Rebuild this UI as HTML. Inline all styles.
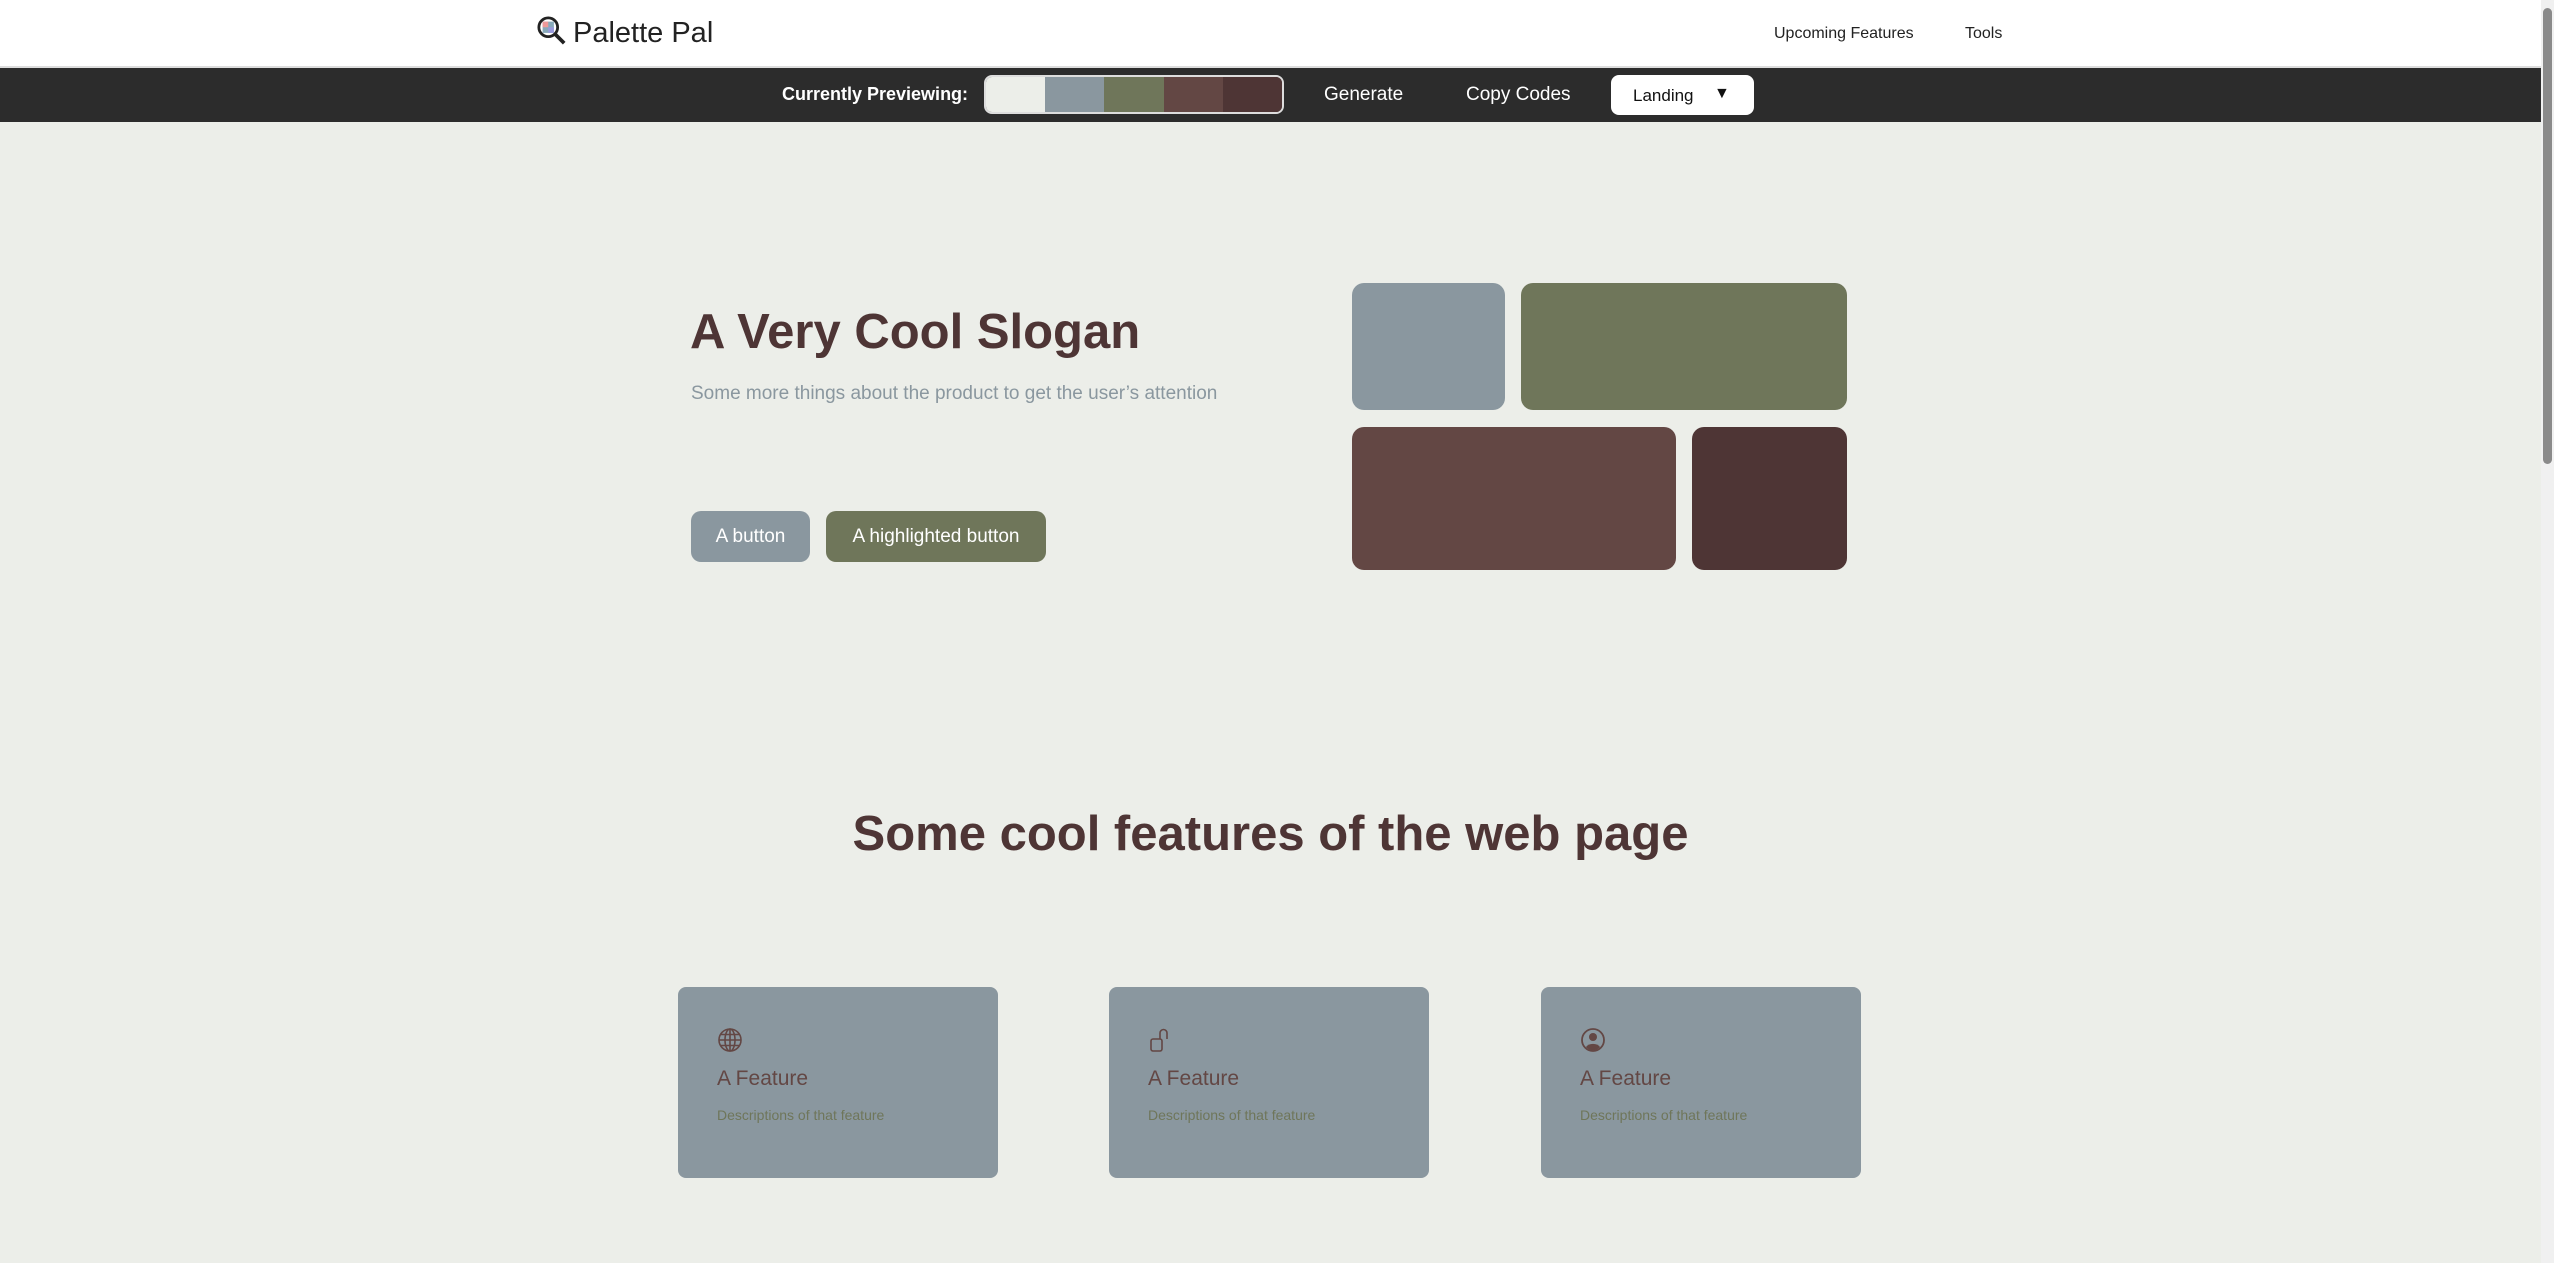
<!DOCTYPE html>
<html><head><meta charset="utf-8"><style>
*{margin:0;padding:0;box-sizing:border-box}
body{width:2554px;height:1263px;overflow:hidden;background:#ECEEE9;font-family:"Liberation Sans",sans-serif;position:relative}
.abs{position:absolute}
.hdr{left:0;top:0;width:2541px;height:66px;background:#fff}
.bar{left:0;top:66px;width:2541px;height:56px;background:#2c2c2c;border-top:2px solid #ddd}
.w{color:#fff;font-size:19px}
.sw{left:984px;top:75px;width:300px;height:39px;border:2px solid #ddd;border-radius:8px;overflow:hidden;display:flex}
.sw div{flex:1}
.tile{border-radius:12px}
.card{top:987px;width:320px;height:191px;background:#8A979F;border-radius:8px}
.card svg{position:absolute;left:39px;top:40px}
.card .t{position:absolute;left:39px;top:80px;font-size:21px;color:#634744}
.card .d{position:absolute;left:39px;top:120px;font-size:14px;color:#6F765A}
</style></head><body>
<div class="abs hdr"></div>
<svg class="abs" style="left:537px;top:16px" width="30" height="30" viewBox="0 0 32 32"><circle cx="12" cy="12" r="10" fill="none" stroke="#222" stroke-width="3"/><rect x="6" y="6" width="12" height="12" fill="#8ab"/><rect x="6" y="6" width="6" height="6" fill="#e99"/><rect x="12" y="12" width="6" height="6" fill="#99d"/><line x1="19" y1="19" x2="29" y2="29" stroke="#222" stroke-width="4"/></svg>
<div class="abs" style="left:573px;top:17px;font-size:29px;color:#222">Palette Pal</div>
<div class="abs" style="left:1774px;top:25px;font-size:16px;color:#222">Upcoming Features</div>
<div class="abs" style="left:1965px;top:25px;font-size:16px;color:#222">Tools</div>
<div class="abs bar"></div>
<div class="abs w" style="left:782px;top:84px;font-weight:bold;font-size:18px">Currently Previewing:</div>
<div class="abs sw"><div style="background:#ECEEE9"></div><div style="background:#8A979F"></div><div style="background:#6F765A"></div><div style="background:#634744"></div><div style="background:#4E3535"></div></div>
<div class="abs w" style="left:1324px;top:84px">Generate</div>
<div class="abs w" style="left:1466px;top:84px">Copy Codes</div>
<div class="abs" style="left:1611px;top:75px;width:143px;height:40px;background:#fff;border-radius:8px"><span class="abs" style="left:22px;top:11px;font-size:17px;color:#111">Landing</span><span class="abs" style="left:103px;top:10px;font-size:16px;color:#111">▼</span></div>
<div class="abs" style="left:2541px;top:0;width:13px;height:1263px;background:#f0f0f0"></div>
<div class="abs" style="left:2543px;top:8px;width:9px;height:456px;background:#8a8a8a;border-radius:5px"></div>

<div class="abs" style="left:690px;top:304px;font-size:49px;font-weight:bold;color:#4E3535">A Very Cool Slogan</div>
<div class="abs" style="left:691px;top:383px;font-size:19px;color:#8A979F">Some more things about the product to get the user’s attention</div>
<div class="abs" style="left:691px;top:511px;width:119px;height:51px;background:#8A979F;border-radius:10px;color:#fff;font-size:19px;text-align:center;line-height:51px">A button</div>
<div class="abs" style="left:826px;top:511px;width:220px;height:51px;background:#6F765A;border-radius:10px;color:#fff;font-size:19px;text-align:center;line-height:51px">A highlighted button</div>
<div class="abs tile" style="left:1352px;top:283px;width:153px;height:127px;background:#8A979F"></div>
<div class="abs tile" style="left:1521px;top:283px;width:326px;height:127px;background:#6F765A"></div>
<div class="abs tile" style="left:1352px;top:427px;width:324px;height:143px;background:#634744"></div>
<div class="abs tile" style="left:1692px;top:427px;width:155px;height:143px;background:#4E3535"></div>

<div class="abs" style="left:0;width:2541px;top:806px;text-align:center;font-size:49px;font-weight:bold;color:#4E3535">Some cool features of the web page</div>

<div class="abs card" style="left:678px"><svg width="26" height="26" viewBox="0 0 26 26" fill="none" stroke="#634744" stroke-width="1.6"><circle cx="13" cy="13" r="11"/><ellipse cx="13" cy="13" rx="5" ry="11"/><line x1="13" y1="2" x2="13" y2="24"/><line x1="2" y1="13" x2="24" y2="13"/><line x1="4" y1="7.5" x2="22" y2="7.5"/><line x1="4" y1="18.5" x2="22" y2="18.5"/></svg><div class="t">A Feature</div><div class="d">Descriptions of that feature</div></div>
<div class="abs card" style="left:1109px"><svg width="26" height="26" viewBox="0 0 26 26" fill="none" stroke="#634744" stroke-width="1.6"><rect x="3" y="12" width="11" height="12" rx="2"/><path d="M12 12V6a3.5 3.5 0 0 1 7 0v6"/></svg><div class="t">A Feature</div><div class="d">Descriptions of that feature</div></div>
<div class="abs card" style="left:1541px"><svg width="26" height="26" viewBox="0 0 26 26"><circle cx="13" cy="13" r="11" fill="none" stroke="#634744" stroke-width="1.8"/><circle cx="13" cy="10" r="4" fill="#634744"/><path d="M6 20a8 6 0 0 1 14 0a9 9 0 0 1-14 0z" fill="#634744"/></svg><div class="t">A Feature</div><div class="d">Descriptions of that feature</div></div>
</body></html>
